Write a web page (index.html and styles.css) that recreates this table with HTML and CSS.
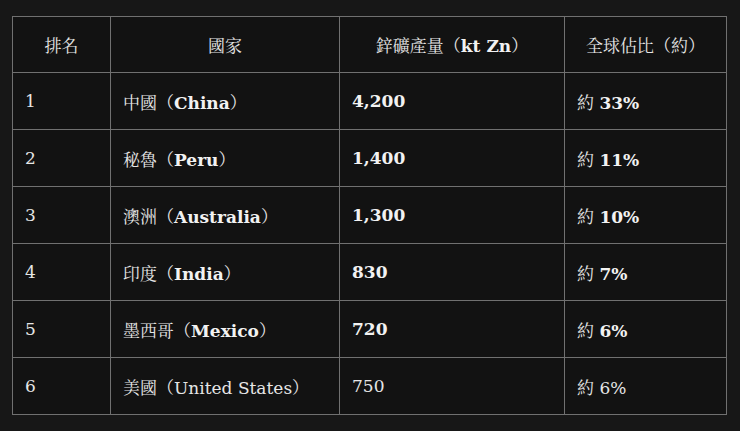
FILE: index.html
```html
<!DOCTYPE html>
<html lang="zh-Hant">
<head>
<meta charset="utf-8">
<title>鋅礦產量</title>
<link rel="stylesheet" href="styles.css">
</head>
<body>
<table class="data">
  <colgroup>
    <col class="c1"><col class="c2"><col class="c3"><col class="c4">
  </colgroup>
  <thead>
    <tr><th>排名</th><th>國家</th><th>鋅礦產量（<b>kt Zn</b>）</th><th>全球佔比（約）</th></tr>
  </thead>
  <tbody>
    <tr><td>1</td><td>中國（<b>China</b>）</td><td><b>4,200</b></td><td>約 <b>33%</b></td></tr>
    <tr><td>2</td><td>秘魯（<b>Peru</b>）</td><td><b>1,400</b></td><td>約 <b>11%</b></td></tr>
    <tr><td>3</td><td>澳洲（<b>Australia</b>）</td><td><b>1,300</b></td><td>約 <b>10%</b></td></tr>
    <tr><td>4</td><td>印度（<b>India</b>）</td><td><b>830</b></td><td>約 <b>7%</b></td></tr>
    <tr><td>5</td><td>墨西哥（<b>Mexico</b>）</td><td><b>720</b></td><td>約 <b>6%</b></td></tr>
    <tr><td>6</td><td>美國（United States）</td><td>750</td><td>約 6%</td></tr>
  </tbody>
</table>
</body>
</html>
```
FILE: styles.css
```css
html, body {
  margin: 0;
  background: #171717;
}
body {
  padding: 16px 12px;
  font-family: "DejaVu Serif", "Noto Serif CJK TC", "Noto Sans CJK TC", serif;
  font-size: 17px;
  color: #e6e6e6;
}
.data {
  border-collapse: collapse;
  width: 714px;
  table-layout: fixed;
  background: #121212;
}
.c1 { width: 98px; }
.c2 { width: 229px; }
.c3 { width: 225px; }
.c4 { width: 162px; }
.data th, .data td {
  border: 1px solid #707070;
  height: 57px;
  padding: 0 12px;
  box-sizing: border-box;
  text-align: left;
  vertical-align: middle;
}
.data th {
  height: 56px;
  font-weight: normal;
  text-align: center;
}
.data b {
  font-weight: bold;
  color: #f2f2f2;
}
```
